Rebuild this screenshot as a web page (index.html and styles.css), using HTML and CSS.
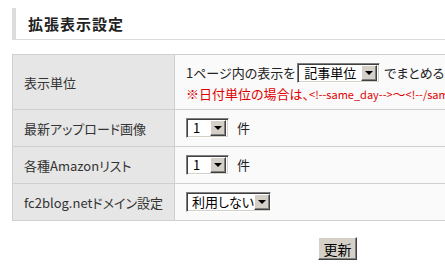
FILE: index.html
```html
<!DOCTYPE html>
<html lang="ja">
<head>
<meta charset="utf-8">
<title>拡張表示設定</title>
<link rel="stylesheet" href="styles.css">
</head>
<body>
<div class="page">
  <h2 class="heading">拡張表示設定</h2>
  <table class="settings">
    <tr class="row-tall">
      <th>表示単位</th>
      <td>
        <div class="line">1ページ内の表示を <span class="sel sel-unit"><span class="sel-text">記事単位</span><span class="arrow"></span></span> でまとめる</div>
        <div class="note">※日付単位の場合は、<span class="code">&lt;!--same_day--&gt;</span>〜<span class="code">&lt;!--/same_day--&gt;</span> を使用してください</div>
      </td>
    </tr>
    <tr>
      <th>最新アップロード画像</th>
      <td><div class="line"><span class="sel sel-num"><span class="sel-text">1</span><span class="arrow"></span></span><span class="unit">件</span></div></td>
    </tr>
    <tr>
      <th>各種Amazonリスト</th>
      <td><div class="line"><span class="sel sel-num"><span class="sel-text">1</span><span class="arrow"></span></span><span class="unit">件</span></div></td>
    </tr>
    <tr>
      <th>fc2blog.netドメイン設定</th>
      <td><div class="line"><span class="sel sel-domain"><span class="sel-text">利用しない</span><span class="arrow"></span></span></div></td>
    </tr>
  </table>
  <div class="actions"><button class="btn" type="button">更新</button></div>
</div>
</body>
</html>
```

FILE: styles.css
```css
html, body {
  margin: 0;
  padding: 0;
  background: #ffffff;
  overflow: hidden;
}
body {
  font-family: "Noto Sans CJK JP", "Noto Sans", sans-serif;
  font-feature-settings: "palt";
  color: #222;
  font-size: 13px;
}
.page {
  padding: 8px 0 0 12px;
  width: 651px;
}
.heading {
  margin: 0;
  height: 32px;
  line-height: 31px;
  border-left: 4px solid #dcdcdc;
  border-bottom: 1px solid #dcdcdc;
  padding-left: 12px;
  font-size: 15px;
  font-weight: bold;
  letter-spacing: 1px;
  color: #222;
  box-sizing: border-box;
  width: 800px;
}
.settings {
  margin-top: 14px;
  width: 651px;
  border-collapse: collapse;
  white-space: nowrap;
}
.settings th, .settings td {
  border: 1px solid #cfcfcf;
  height: 37px;
  box-sizing: border-box;
  font-size: 13px;
  text-align: left;
  vertical-align: middle;
}
.settings th {
  width: 162px;
  background: #e6e6e6;
  font-weight: normal;
  padding: 0 0 0 11px;
  color: #333;
}
.settings td {
  background: #fafafa;
  padding: 0 0 0 11px;
}
.row-tall th, .row-tall td {
  height: 55px;
}
.line {
  display: flex;
  align-items: center;
  height: 20px;
  line-height: 20px;
}
.note {
  margin-top: 3px;
  line-height: 16px;
  height: 16px;
  color: #e00000;
  font-size: 13px;
}
.note .code {
  font-size: 11px;
}
.sel {
  display: inline-flex;
  align-items: center;
  justify-content: space-between;
  box-sizing: border-box;
  height: 20px;
  background: #fff;
  border-top: 1px solid #808080;
  border-left: 1px solid #808080;
  border-right: 1px solid #ffffff;
  border-bottom: 1px solid #ffffff;
  box-shadow: inset 1px 1px 0 #404040, inset -1px -1px 0 #d4d0c8;
  padding: 2px 2px 2px 6px;
  margin: 0 4px 0 2px;
  color: #000;
  font-size: 13px;
}
.sel-unit { width: 83px; }
.sel-num { width: 43px; margin-left: 0; }
.sel-domain { width: 85px; margin-left: 0; padding-left: 5px; }
.sel-text { line-height: 16px; }
.arrow {
  position: relative;
  flex: none;
  width: 16px;
  height: 16px;
  box-sizing: border-box;
  background: #d4d0c8;
  border-top: 1px solid #ffffff;
  border-left: 1px solid #ffffff;
  border-right: 1px solid #404040;
  border-bottom: 1px solid #404040;
  box-shadow: inset -1px -1px 0 #808080;
}
.arrow::after {
  content: "";
  position: absolute;
  left: 3px;
  top: 5px;
  border-left: 4px solid transparent;
  border-right: 4px solid transparent;
  border-top: 4px solid #000;
}
.unit {
  margin-left: 4px;
}
.actions {
  text-align: center;
  margin-top: 16px;
}
.btn {
  font-family: "Noto Sans CJK JP", sans-serif;
  font-size: 14px;
  width: 39px;
  height: 23px;
  padding: 0;
  background: #d4d0c8;
  color: #000;
  border-top: 1px solid #ffffff;
  border-left: 1px solid #ffffff;
  border-right: 1px solid #404040;
  border-bottom: 1px solid #404040;
  box-shadow: inset -1px -1px 0 #808080;
  line-height: 20px;
}
```
